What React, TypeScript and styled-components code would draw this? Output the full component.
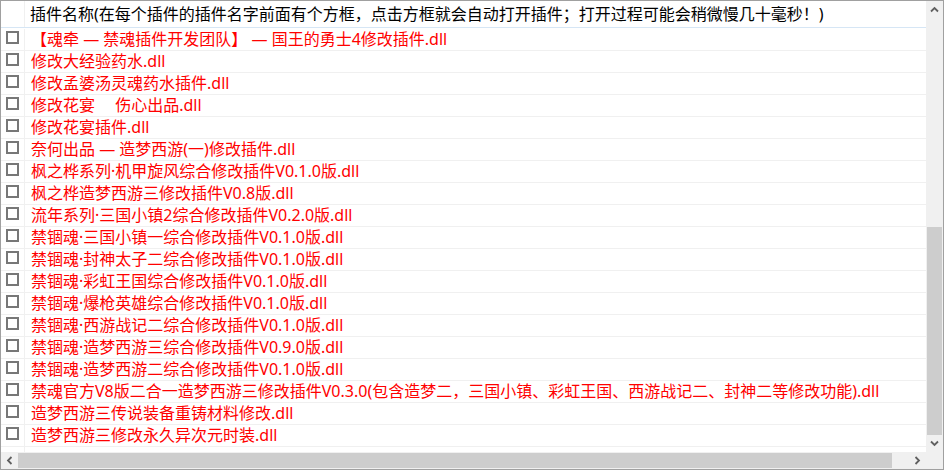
import React from "react";
import styled, { createGlobalStyle } from "styled-components";

const GlobalStyle = createGlobalStyle`
  html, body {
    margin: 0;
    padding: 0;
    background: #ffffff;
  }
`;

const Frame = styled.div`
  width: 944px;
  height: 470px;
  box-sizing: border-box;
  border: 1px solid #a0a0a0;
  background: #ffffff;
  display: grid;
  grid-template-columns: 1fr 17px;
  grid-template-rows: 1fr 17px;
  overflow: hidden;
  font-family: "Noto Sans", "Noto Sans CJK SC", sans-serif;
`;

const ListArea = styled.div`
  display: flex;
  flex-direction: column;
  overflow: hidden;
  min-width: 0;
`;

const HeaderRow = styled.div`
  display: flex;
  height: 26px;
  flex-shrink: 0;
  border-bottom: 1px solid #d6e6f5;
  margin-bottom: 1px;
`;

const CheckCol = styled.div`
  width: 24px;
  flex-shrink: 0;
  border-right: 1px solid #f0f0f0;
  display: flex;
  justify-content: center;
  align-items: flex-start;
  padding-top: 2px;
  box-sizing: border-box;
`;

const HeaderText = styled.div`
  padding-left: 5px;
  font-size: 16px;
  line-height: 26px;
  color: #000000;
  white-space: nowrap;
`;

const Row = styled.div`
  display: flex;
  height: 22px;
  flex-shrink: 0;
  box-sizing: border-box;
  border-bottom: 1px solid #f0f0f0;
`;

const ItemText = styled.div<{ $color?: string }>`
  padding-left: 6px;
  font-size: 16px;
  line-height: 21px;
  color: ${(p) => p.$color || "#ff0000"};
  white-space: nowrap;
`;

const Box = styled.span`
  width: 13px;
  height: 13px;
  box-sizing: border-box;
  border: 2px solid #777777;
  background: #ffffff;
  display: block;
`;

const VScroll = styled.div`
  background: #f0f0f0;
  display: flex;
  flex-direction: column;
`;

const HScroll = styled.div`
  background: #f0f0f0;
  display: flex;
`;

const ArrowBtn = styled.div`
  width: 17px;
  height: 17px;
  flex-shrink: 0;
  display: flex;
  align-items: center;
  justify-content: center;
`;

const Track = styled.div<{ $vertical?: boolean }>`
  flex: 1;
  display: flex;
  flex-direction: ${(p) => (p.$vertical ? "column" : "row")};
`;

const Spacer = styled.div<{ $size: number; $vertical?: boolean }>`
  flex-shrink: 0;
  ${(p) => (p.$vertical ? `height: ${p.$size}px;` : `width: ${p.$size}px;`)}
`;

const Thumb = styled.div<{ $vertical?: boolean }>`
  flex: 1;
  background: #cdcdcd;
  ${(p) => (p.$vertical ? "margin: 0 1px;" : "margin: 1px 0;")}
`;

const Corner = styled.div`
  background: #f0f0f0;
`;

const Chevron: React.FC<{ dir: "up" | "down" | "left" | "right" }> = ({ dir }) => {
  const rot = { up: 0, right: 90, down: 180, left: 270 }[dir];
  return (
    <svg width="9" height="9" viewBox="0 0 9 9" style={{ transform: `rotate(${rot}deg)` }}>
      <path d="M1 6.5 L4.5 3 L8 6.5" fill="none" stroke="#606060" strokeWidth="1.8" />
    </svg>
  );
};

const items: string[] = [
  "【魂牵 — 禁魂插件开发团队】 — 国王的勇士4修改插件.dll",
  "修改大经验药水.dll",
  "修改孟婆汤灵魂药水插件.dll",
  "修改花宴　 伤心出品.dll",
  "修改花宴插件.dll",
  "奈何出品 — 造梦西游(一)修改插件.dll",
  "枫之桦系列·机甲旋风综合修改插件V0.1.0版.dll",
  "枫之桦造梦西游三修改插件V0.8版.dll",
  "流年系列·三国小镇2综合修改插件V0.2.0版.dll",
  "禁锢魂·三国小镇一综合修改插件V0.1.0版.dll",
  "禁锢魂·封神太子二综合修改插件V0.1.0版.dll",
  "禁锢魂·彩虹王国综合修改插件V0.1.0版.dll",
  "禁锢魂·爆枪英雄综合修改插件V0.1.0版.dll",
  "禁锢魂·西游战记二综合修改插件V0.1.0版.dll",
  "禁锢魂·造梦西游三综合修改插件V0.9.0版.dll",
  "禁锢魂·造梦西游二综合修改插件V0.1.0版.dll",
  "禁魂官方V8版二合一造梦西游三修改插件V0.3.0(包含造梦二，三国小镇、彩虹王国、西游战记二、封神二等修改功能).dll",
  "造梦西游三传说装备重铸材料修改.dll",
  "造梦西游三修改永久异次元时装.dll",
];

const App: React.FC = () => {
  return (
    <>
      <GlobalStyle />
      <Frame>
        <ListArea>
          <HeaderRow>
            <CheckCol />
            <HeaderText>
              插件名称(在每个插件的插件名字前面有个方框，点击方框就会自动打开插件；打开过程可能会稍微慢几十毫秒！)
            </HeaderText>
          </HeaderRow>
          {items.map((name) => (
            <Row key={name}>
              <CheckCol>
                <Box />
              </CheckCol>
              <ItemText>{name}</ItemText>
            </Row>
          ))}
          <Row>
            <CheckCol />
          </Row>
        </ListArea>
        <VScroll>
          <ArrowBtn>
            <Chevron dir="up" />
          </ArrowBtn>
          <Track $vertical>
            <Spacer $vertical $size={209} />
            <Thumb $vertical />
          </Track>
          <ArrowBtn>
            <Chevron dir="down" />
          </ArrowBtn>
        </VScroll>
        <HScroll>
          <ArrowBtn>
            <Chevron dir="left" />
          </ArrowBtn>
          <Track>
            <Thumb />
            <Spacer $size={17} />
          </Track>
          <ArrowBtn>
            <Chevron dir="right" />
          </ArrowBtn>
        </HScroll>
        <Corner />
      </Frame>
    </>
  );
};

export default App;
